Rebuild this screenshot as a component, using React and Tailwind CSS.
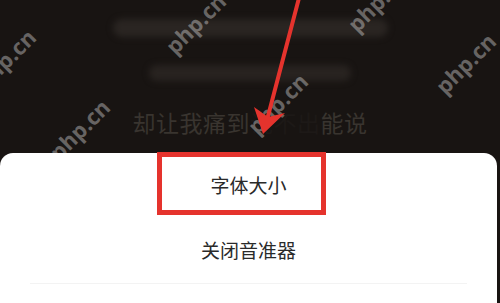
import React from 'react';

const cjk = { fontFamily: '"Noto Sans CJK SC", "Noto Sans", sans-serif' };

const marks = [
  { left: 'left-[-32px]', top: 'top-[48px]' },
  { left: 'left-[158px]', top: 'top-[12px]' },
  { left: 'left-[340px]', top: 'top-[-10px]' },
  { left: 'left-[240px]', top: 'top-[92px]' },
  { left: 'left-[42px]', top: 'top-[118px]' },
  { left: 'left-[428px]', top: 'top-[52px]' },
];

const Watermark = ({ left, top }) => (
  <div
    className={`absolute ${left} ${top} -rotate-45 text-[22px] font-bold text-white/35 leading-none pointer-events-none`}
    style={{ fontFamily: '"Open Sans", "Liberation Sans", sans-serif' }}
  >
    php.cn
  </div>
);

export default function App() {
  return (
    <div className="relative w-[500px] h-[303px] overflow-hidden bg-[#181412] flex flex-col" style={cjk}>
      {/* lyrics behind the sheet */}
      <div className="h-[153px] flex flex-col items-center pt-[19px]">
        <div className="w-[275px] h-[18px] rounded-full bg-[#2a2522] blur-[3px]" />
        <div className="w-[202px] h-[16px] mt-[28px] rounded-full bg-[#282320] blur-[3px]" />
        <div className="mt-[30px] text-[23px] leading-none text-[#39342f] tracking-[0.5px]">
          却让我痛到<span className="text-[#1d1917]">说不出</span>能说
        </div>
      </div>

      {/* bottom sheet */}
      <div className="flex-1 mr-[3px] bg-white rounded-t-[13px] flex flex-col">
        <div className="h-[64px] flex items-center justify-center text-[19px] text-[#2a2a2a]">字体大小</div>
        <div className="h-[66px] flex items-center justify-center text-[19px] text-[#2a2a2a]">关闭音准器</div>
        <div className="mx-[30px] h-px bg-[#f3f3f3]" />
      </div>

      {marks.map((m, i) => (
        <Watermark key={i} {...m} />
      ))}

      {/* annotation: red box + arrow */}
      <div className="absolute left-[157px] top-[152px] w-[169px] h-[63px] border-[5px] border-[#e5332d]" />
      <svg className="absolute inset-0" width="500" height="303" viewBox="0 0 500 303">
        <line x1="299" y1="-2" x2="267" y2="120" stroke="#e5332d" strokeWidth="4" strokeLinecap="round" />
        <polygon points="263,134 254,107 268,117 285,113" fill="#e5332d" />
      </svg>
    </div>
  );
}
